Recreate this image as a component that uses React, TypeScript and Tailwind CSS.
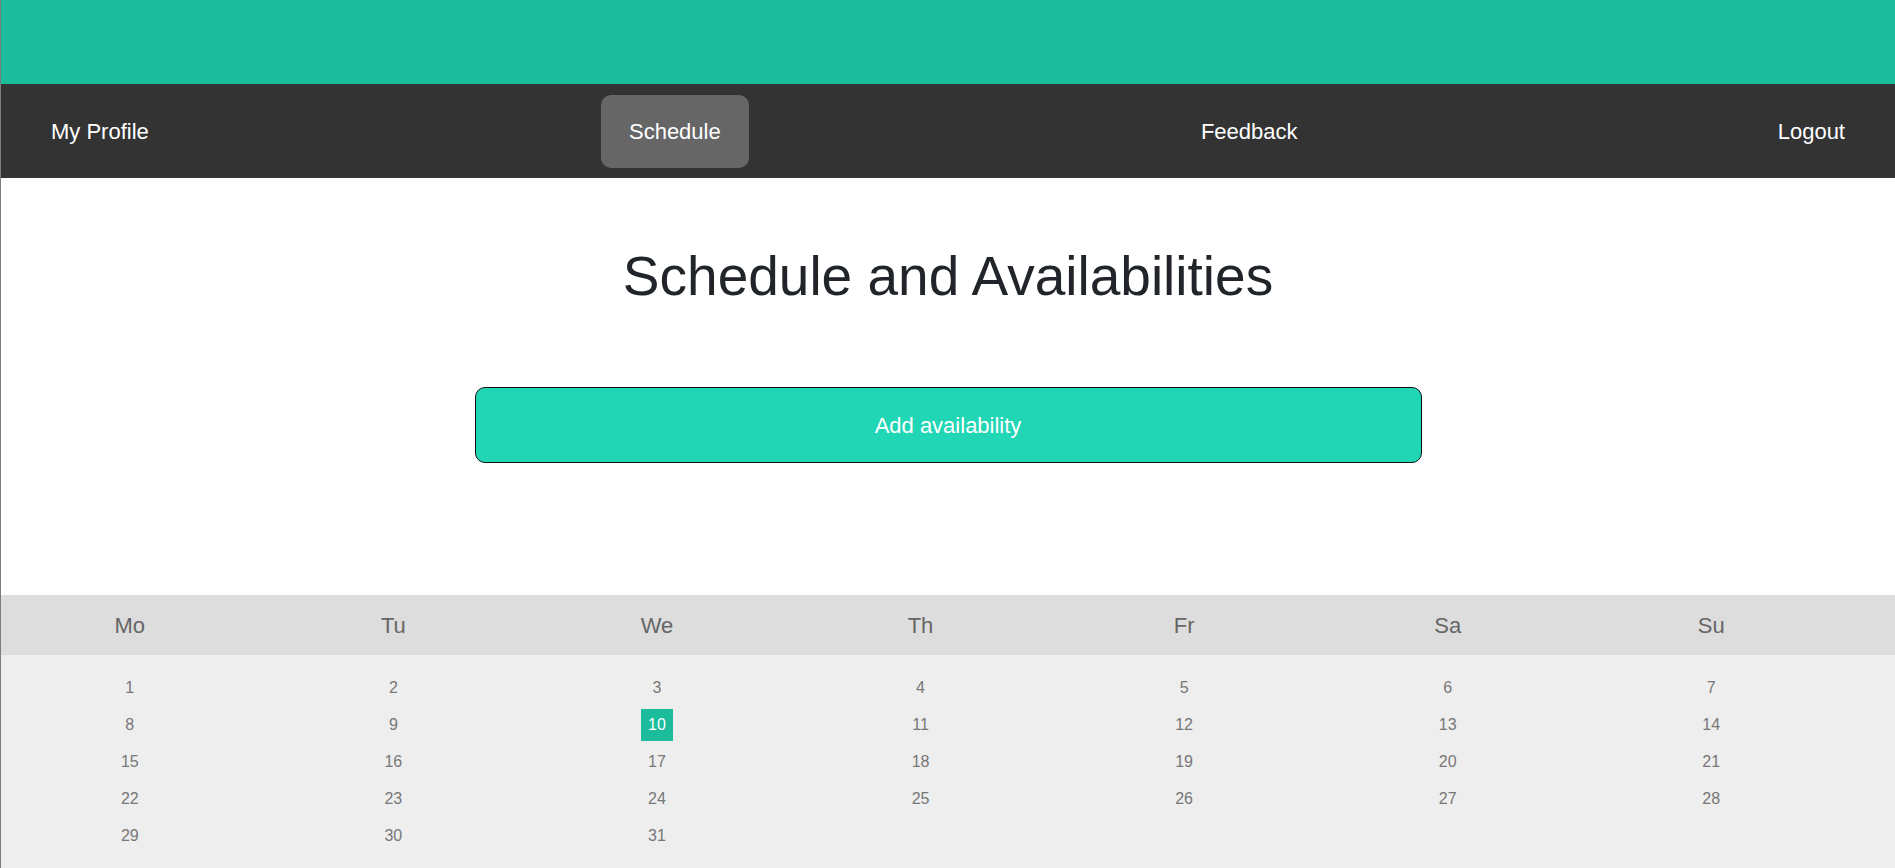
import React from "react";

const weekdays = ["Mo", "Tu", "We", "Th", "Fr", "Sa", "Su"];

function buildRows(): (number | null)[][] {
  const rows: (number | null)[][] = [];
  let d = 1;
  for (let r = 0; r < 5; r++) {
    const row: (number | null)[] = [];
    for (let c = 0; c < 7; c++) {
      row.push(d <= 31 ? d : null);
      d++;
    }
    rows.push(row);
  }
  return rows;
}

export default function App() {
  const rows = buildRows();
  return (
    <div className="min-h-screen bg-white border-l border-[#7d7d7d] font-['Liberation_Sans',Arial,sans-serif]">
      <div className="h-[84px] bg-[#1abc9c]" />
      <nav className="h-[94px] bg-[#333333] flex items-center justify-between px-[22px]">
        <a className="h-[73px] flex items-center px-7 text-[22px] text-white">My Profile</a>
        <a className="h-[73px] flex items-center px-7 text-[22px] text-white bg-[#666666] rounded-[10px]">Schedule</a>
        <a className="h-[73px] flex items-center px-7 text-[22px] text-white">Feedback</a>
        <a className="h-[73px] flex items-center px-7 text-[22px] text-white">Logout</a>
      </nav>
      <main className="flex flex-col items-center pt-[66px]">
        <h1 className="text-[55px] leading-[65px] text-[#212529] font-normal">
          Schedule and Availabilities
        </h1>
        <button className="mt-[78px] w-[947px] h-[76px] bg-[#20d6b5] border border-[#111] rounded-[10px] text-white text-[22px]">
          Add availability
        </button>
      </main>
      <section className="mt-[132px]">
        <div className="h-[60px] bg-[#dddddd] flex items-center gap-[6px]">
          {weekdays.map((w) => (
            <div key={w} className="w-[13.6%] text-center text-[22px] text-[#666666]">
              {w}
            </div>
          ))}
        </div>
        <div className="bg-[#eeeeee] pt-[14px] pb-[15px]">
          {rows.map((row, ri) => (
            <div key={ri} className="h-[37px] flex items-center gap-[6px]">
              {row.map((d, ci) => (
                <div key={ci} className="w-[13.6%] text-center text-[16px] leading-[18px] text-[#777777]">
                  {d === 10 ? (
                    <span className="inline-block p-[7px] bg-[#1abc9c] text-white">10</span>
                  ) : (
                    d ?? ""
                  )}
                </div>
              ))}
            </div>
          ))}
        </div>
      </section>
    </div>
  );
}
